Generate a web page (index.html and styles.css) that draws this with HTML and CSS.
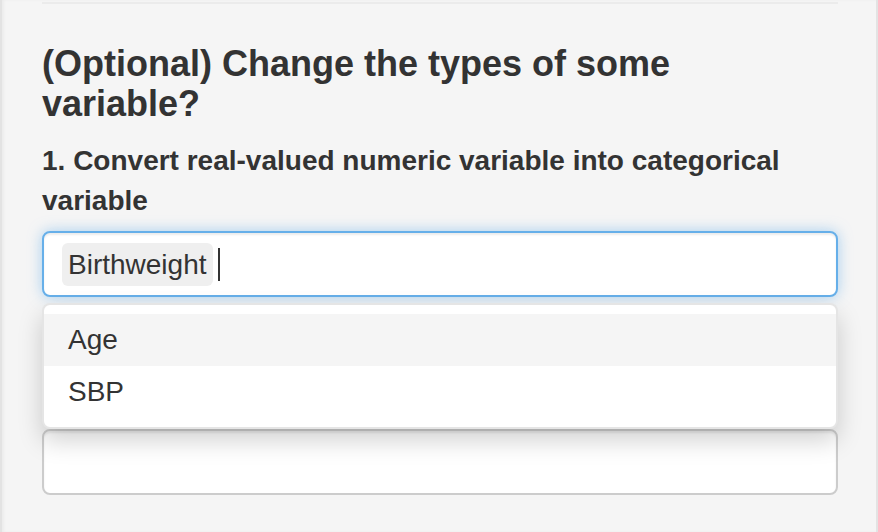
FILE: index.html
```html
<!DOCTYPE html>
<html lang="en">
<head>
<meta charset="utf-8">
<title>Change variable types</title>
<link rel="stylesheet" href="styles.css">
</head>
<body>
<div class="well">
  <hr class="divider">
  <h4 class="section-title">(Optional) Change the types of some variable?</h4>
  <div class="form-group">
    <label class="control-label">1. Convert real-valued numeric variable into categorical variable</label>
    <div class="select">
      <div class="select-input focus">
        <span class="tag">Birthweight</span>
        <span class="caret-line"></span>
      </div>
      <div class="dropdown">
        <div class="option active">Age</div>
        <div class="option">SBP</div>
      </div>
    </div>
  </div>
  <div class="form-group next">
    <div class="select-input"></div>
  </div>
</div>
</body>
</html>
```
FILE: styles.css
```css
html, body {
  margin: 0;
  padding: 0;
  background: #f5f5f5;
}

body {
  font-family: "Liberation Sans", Arial, Helvetica, sans-serif;
  color: #333;
}

.well {
  min-height: 100vh;
  box-sizing: border-box;
  background: #f5f5f5;
  border-left: 2px solid #e3e3e3;
  border-right: 2px solid #e3e3e3;
  box-shadow: inset 2px 0 3px rgba(0, 0, 0, 0.04);
  padding: 2px 38px 0 40px;
}

.divider {
  margin: 0 0 40px;
  border: 0;
  border-top: 2px solid #ebebeb;
  height: 0;
}

.section-title {
  margin: 0 0 18px;
  font-size: 36px;
  line-height: 39.6px;
  font-weight: bold;
  max-width: 760px;
}

.control-label {
  display: block;
  font-size: 28px;
  line-height: 40px;
  font-weight: bold;
  margin-bottom: 10px;
}

.select {
  position: relative;
}

.select-input {
  box-sizing: border-box;
  height: 66px;
  background: #fff;
  border: 2px solid #ccc;
  border-radius: 8px;
  padding: 0 18px;
  display: flex;
  align-items: center;
  box-shadow: inset 0 2px 2px rgba(0, 0, 0, 0.075);
}

.select-input.focus {
  border-color: #66afe9;
  box-shadow: inset 0 2px 2px rgba(0, 0, 0, 0.075), 0 0 14px rgba(102, 175, 233, 0.55);
}

.tag {
  background: #efefef;
  border-radius: 6px;
  padding: 0 6px;
  font-size: 28px;
  line-height: 43px;
  color: #333;
}

.caret-line {
  width: 2px;
  height: 33px;
  margin-left: 5px;
  background: #333;
}

.dropdown {
  position: absolute;
  left: 0;
  right: 0;
  top: 100%;
  margin-top: 6px;
  z-index: 10;
  background: #fff;
  border: 2px solid rgba(0, 0, 0, 0.1);
  border-radius: 8px;
  padding: 9px 0;
  box-shadow: 0 12px 24px rgba(0, 0, 0, 0.175);
}

.option {
  font-size: 28px;
  line-height: 40px;
  padding: 6px 24px;
  color: #333;
}

.option.active {
  background: #f5f5f5;
}

.next {
  margin-top: 132px;
}
```
